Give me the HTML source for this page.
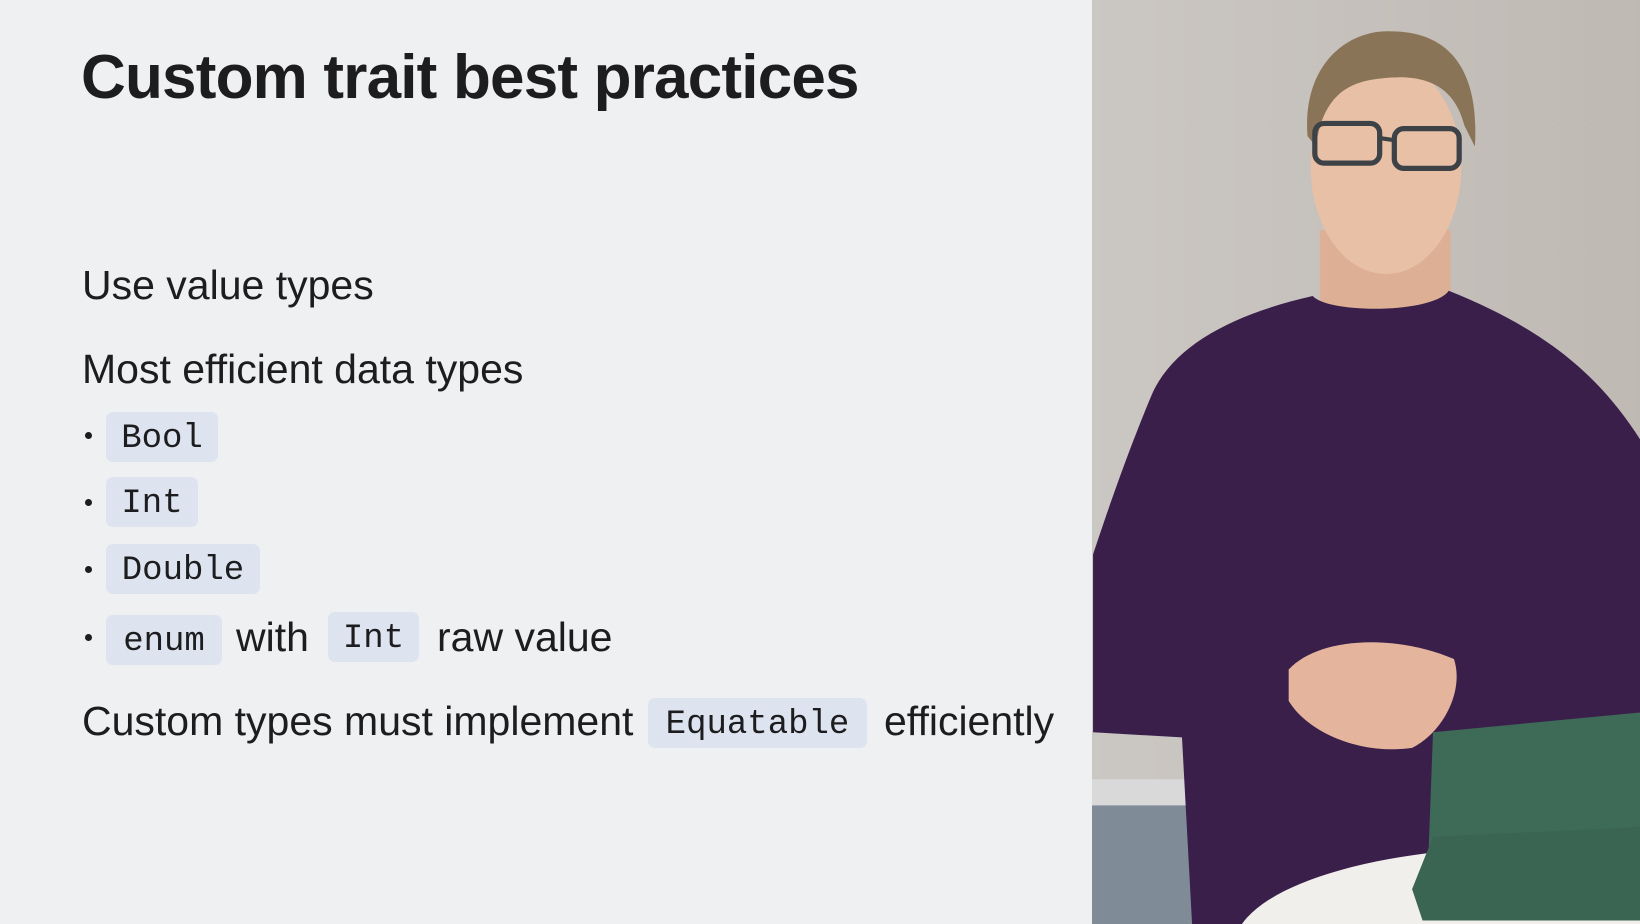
<!DOCTYPE html>
<html><head><meta charset="utf-8"><style>
html,body{margin:0;padding:0;width:1640px;height:924px;overflow:hidden}
body{background:#eff0f2;position:relative;font-family:"Liberation Sans",sans-serif;color:#1d1d1f}
.t{position:absolute;left:82px;white-space:nowrap;line-height:48px}
h1{position:absolute;left:81px;top:41px;margin:0;font-size:62px;font-weight:bold;letter-spacing:-0.8px;line-height:74px}
.b{font-size:41px}
.c{position:absolute;background:#dde3ef;border-radius:7px;font-family:"Liberation Mono",monospace;font-size:34px;line-height:54px;height:50px;text-align:center;color:#1d1d1f}
.dot{position:absolute;left:85px;width:7px;height:7px;border-radius:50%;background:#1d1d1f}
</style></head><body>
<h1>Custom trait best practices</h1>
<div class="t b" style="top:261px">Use value types</div>
<div class="t b" style="top:345px">Most efficient data types</div>
<div class="dot" style="top:432px"></div><div class="c" style="left:106px;top:412px;width:112px">Bool</div>
<div class="dot" style="top:499px"></div><div class="c" style="left:106px;top:477px;width:92px">Int</div>
<div class="dot" style="top:566px"></div><div class="c" style="left:106px;top:544px;width:154px">Double</div>
<div class="dot" style="top:634px"></div><div class="c" style="left:106px;top:615px;width:116px">enum</div>
<div class="t b" style="left:236px;top:613px">with</div>
<div class="c" style="left:328px;top:612px;width:91px">Int</div>
<div class="t b" style="left:437px;top:613px">raw value</div>
<div class="t b" style="top:697px">Custom types must implement</div>
<div class="c" style="left:648px;top:698px;width:219px">Equatable</div>
<div class="t b" style="left:884px;top:697px">efficiently</div>
<svg style="position:absolute;left:0;top:0;display:block" width="1640" height="924" viewBox="0 0 1640 924">
<defs><clipPath id="cp"><rect x="1092" y="0" width="548" height="924"/></clipPath>
<linearGradient id="w" x1="0" x2="1"><stop offset="0" stop-color="#cbc7c3"/><stop offset="1" stop-color="#bfb9b3"/></linearGradient></defs>
<g clip-path="url(#cp)"><g transform="scale(1.046)">
<rect x="1040" y="0" width="540" height="890" fill="url(#w)"/>
<rect x="1040" y="745" width="120" height="25" fill="#d9d9d9"/>
<rect x="1040" y="770" width="120" height="120" fill="#7f8c97"/>
<rect x="1262" y="220" width="125" height="90" fill="#ddb096"/>
<ellipse cx="1325" cy="160" rx="72" ry="102" fill="#e8c0a6"/>
<path d="M1250,130 C1245,60 1290,28 1330,30 C1380,30 1415,60 1410,140 L1400,120 C1390,80 1360,70 1320,75 C1290,78 1265,90 1258,140 Z" fill="#8a7457"/>
<rect x="1257" y="118" width="62" height="38" rx="9" fill="none" stroke="#3d4247" stroke-width="5"/>
<rect x="1333" y="123" width="62" height="38" rx="9" fill="none" stroke="#3d4247" stroke-width="5"/>
<line x1="1319" y1="132" x2="1333" y2="134" stroke="#3d4247" stroke-width="4"/>
<path d="M1255,283 C1180,300 1120,330 1100,380 C1075,440 1055,500 1045,530 L1045,700 L1130,705 L1140,890 L1375,890 L1385,705 L1580,690 L1580,440 C1540,370 1490,320 1385,278 C1370,300 1270,300 1255,283 Z" fill="#3b1f4b"/>
<path d="M1232,640 C1260,610 1330,605 1390,630 C1400,660 1380,700 1350,715 C1300,722 1250,700 1232,670 Z" fill="#e4b49c"/>
<ellipse cx="1460" cy="905" rx="280" ry="95" fill="#f1efeb"/>
<path d="M1370,700 L1580,680 L1580,800 L1365,835 Z" fill="#3d6b57"/>
<path d="M1350,850 L1370,800 L1580,790 L1580,880 L1360,880 Z" fill="#3a6552"/>
</g></g></svg>
</body></html>
